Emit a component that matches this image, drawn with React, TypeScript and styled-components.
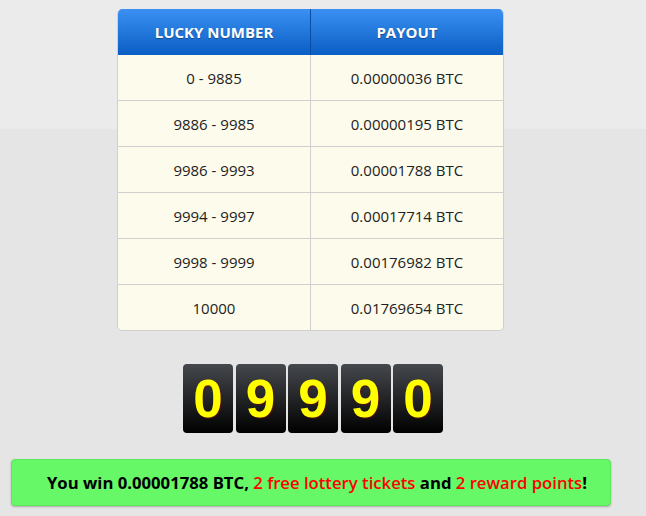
import React from "react";
import styled, { createGlobalStyle } from "styled-components";

const Global = createGlobalStyle`
  html, body { margin: 0; padding: 0; }
  body {
    background: #e5e5e5;
    font-family: "Open Sans", "Liberation Sans", sans-serif;
    width: 646px;
    height: 516px;
    overflow: hidden;
  }
`;

const Page = styled.div`
  position: relative;
  width: 646px;
  height: 516px;
  background: linear-gradient(#ebebeb 0, #ebebeb 129px, #e5e5e5 129px);
  padding-top: 9px;
  box-sizing: border-box;
  display: flex;
  flex-direction: column;
  align-items: flex-start;
`;

const Table = styled.div`
  width: 387px;
  margin-left: 117px;
  border: 1px solid #d0d0d0;
  border-top: none;
  border-radius: 5px;
  overflow: hidden;
  background: #fdfbec;
  display: grid;
  grid-template-columns: 193px 1fr;
  box-sizing: border-box;
`;

const HeadCell = styled.div<{ $last?: boolean }>`
  height: 46px;
  display: flex;
  align-items: center;
  justify-content: center;
  background: linear-gradient(#3b90f2, #0a5ec4);
  color: #fff;
  font-weight: 700;
  font-size: 15px;
  text-shadow: 0 1px 1px rgba(0, 0, 0, 0.35);
  border-right: ${(p) => (p.$last ? "none" : "1px solid #0a4fa6")};
`;

const Cell = styled.div<{ $last?: boolean; $bottom?: boolean }>`
  height: 45px;
  display: flex;
  align-items: center;
  justify-content: center;
  font-size: 15px;
  color: #222;
  border-right: ${(p) => (p.$last ? "none" : "1px solid #cfcfcf")};
  border-bottom: ${(p) => (p.$bottom ? "none" : "1px solid #cfcfcf")};
`;

const Digits = styled.div`
  display: flex;
  gap: 2.5px;
  margin-top: 33px;
  margin-left: 183px;
`;

const Digit = styled.div`
  width: 50px;
  height: 69px;
  border-radius: 4px;
  background: linear-gradient(#45484d, #000);
  display: flex;
  align-items: center;
  justify-content: center;
  font-family: "Liberation Sans", Arial, sans-serif;
  font-weight: 700;
  font-size: 53px;
  color: #ffff00;
  text-shadow: 1px 1px 1px #5a1010;
`;

const WinBar = styled.div`
  margin-top: 26px;
  margin-left: 11px;
  width: 600px;
  height: 47px;
  box-sizing: border-box;
  padding-left: 12px;
  background: #66f866;
  border: 1px solid #5ee55e;
  border-radius: 4px;
  box-shadow: 0 1px 2px rgba(0, 0, 0, 0.25);
  display: flex;
  align-items: center;
  justify-content: center;
  font-weight: 700;
  font-size: 16.7px;
  color: #000;
`;

const Red = styled.span`
  color: #ff0000;
  font-weight: 600;
`;

const rows: [string, string][] = [
  ["0 - 9885", "0.00000036 BTC"],
  ["9886 - 9985", "0.00000195 BTC"],
  ["9986 - 9993", "0.00001788 BTC"],
  ["9994 - 9997", "0.00017714 BTC"],
  ["9998 - 9999", "0.00176982 BTC"],
  ["10000", "0.01769654 BTC"],
];

export default function App() {
  return (
    <>
      <Global />
      <Page>
        <Table>
          <HeadCell>LUCKY NUMBER</HeadCell>
          <HeadCell $last>PAYOUT</HeadCell>
          {rows.map(([a, b], i) => (
            <React.Fragment key={a}>
              <Cell $bottom={i === rows.length - 1}>{a}</Cell>
              <Cell $last $bottom={i === rows.length - 1}>
                {b}
              </Cell>
            </React.Fragment>
          ))}
        </Table>
        <Digits>
          {"09990".split("").map((d, i) => (
            <Digit key={i}>{d}</Digit>
          ))}
        </Digits>
        <WinBar>
          You win 0.00001788 BTC,&nbsp;<Red>2 free lottery tickets</Red>&nbsp;and&nbsp;
          <Red>2 reward points</Red>!
        </WinBar>
      </Page>
    </>
  );
}
